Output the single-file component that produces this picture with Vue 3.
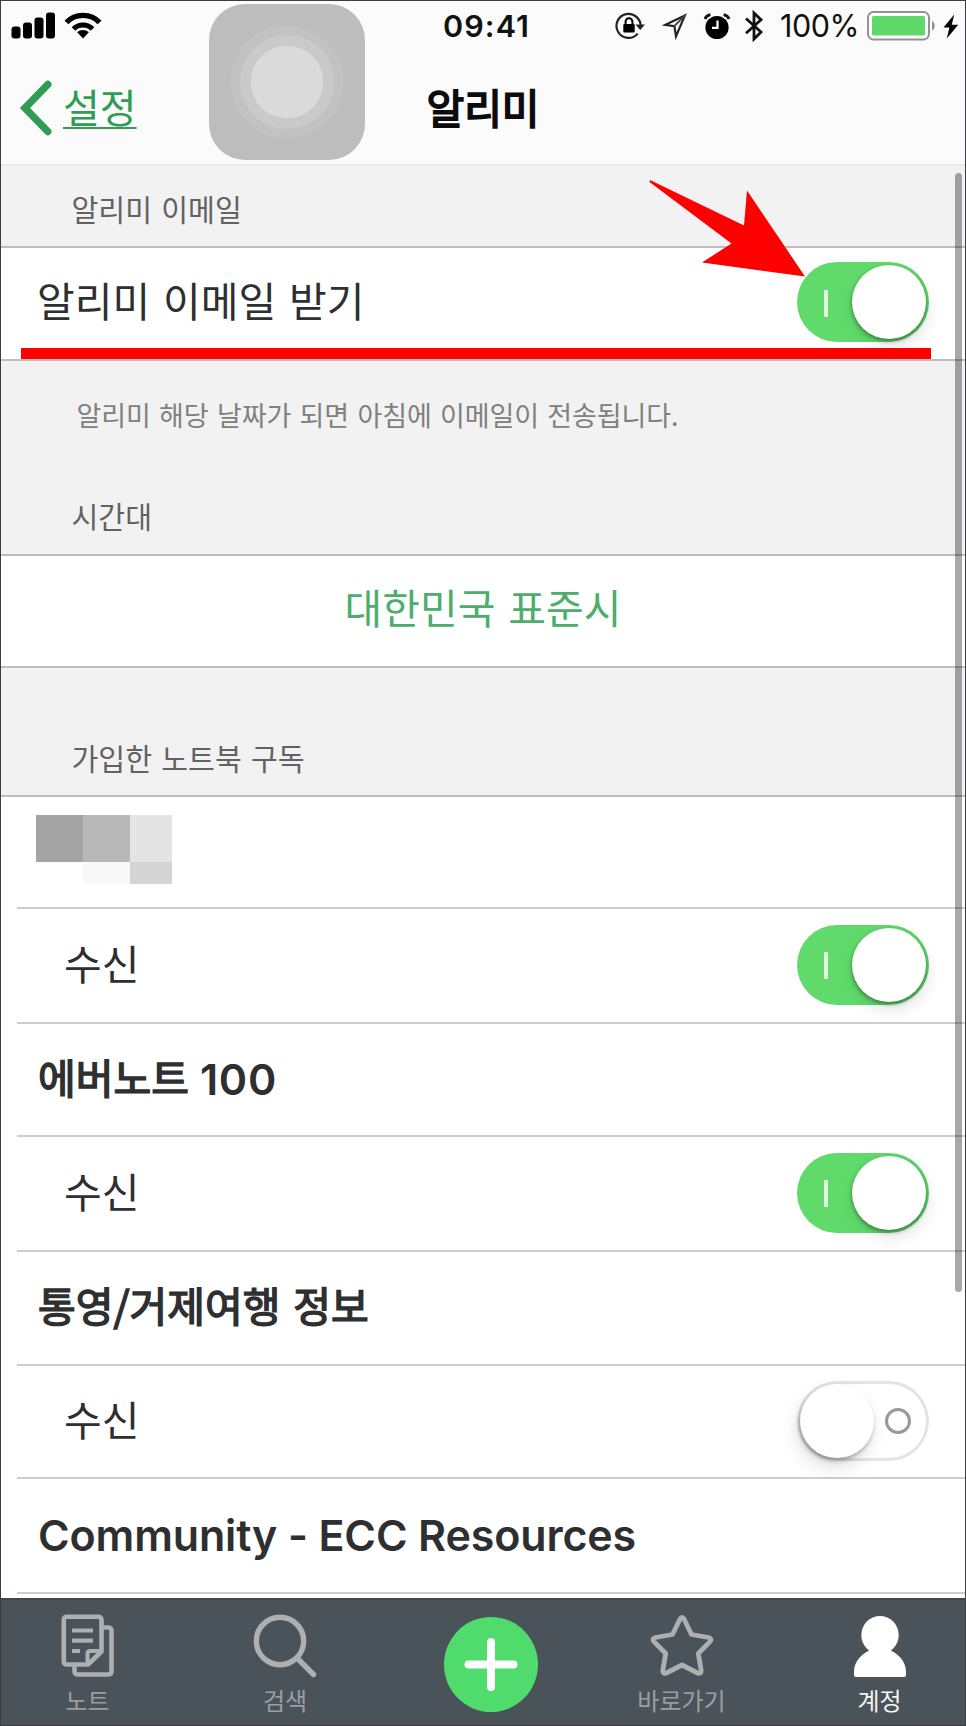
<script setup>
import { ref } from 'vue'

const emailOn = ref(true)

const notebooks = ref([
  { kind: 'masked', height: 112 },
  { kind: 'toggle', label: '수신', on: true, height: 115 },
  { kind: 'title', label: '에버노트', latin: '100', height: 113 },
  { kind: 'toggle', label: '수신', on: true, height: 115 },
  { kind: 'title', label: '통영/거제여행 정보', height: 114 },
  { kind: 'toggle', label: '수신', on: false, height: 113 },
  { kind: 'title', latin: 'Community - ECC Resources', height: 115 },
])
</script>

<template>
  <div class="screen">
    <header class="top">
      <div class="status">
        <svg class="signal" width="46" height="28" viewBox="0 0 46 28">
          <rect x="0.5" y="14.5" width="9" height="12" rx="3" />
          <rect x="12" y="10.5" width="9" height="16" rx="3" />
          <rect x="23.5" y="5.5" width="9" height="21" rx="3" />
          <rect x="35" y="0.5" width="9" height="26" rx="3" />
        </svg>
        <svg class="wifi" width="38" height="28" viewBox="0 0 38 28">
          <path d="M2.5 10.5 C11 1 27 1 35.5 10.5" fill="none" stroke="#000" stroke-width="5.4" />
          <path d="M9.5 17 C14.5 11.6 23.5 11.6 28.5 17" fill="none" stroke="#000" stroke-width="5" />
          <path d="M13.2 20.2 C16.5 17.4 21.5 17.4 24.8 20.2 L19 26.5Z" />
        </svg>
        <span class="clock">09:41</span>
        <svg class="lock" width="30" height="28" viewBox="0 0 30 28">
          <path d="M25.4 15.5 A12 12 0 1 0 22.7 21.6" fill="none" stroke="#222" stroke-width="2.2" />
          <path d="M20.5 12.5 H30 L25.2 18Z" fill="#222" />
          <rect x="8.3" y="12" width="11.4" height="8.5" rx="1" />
          <path d="M10.6 12.5 V9.6 a3.4 3.4 0 0 1 6.8 0 V12.5" fill="none" stroke="#000" stroke-width="2" />
        </svg>
        <svg class="location" width="26" height="27" viewBox="0 0 26 27">
          <path d="M22.8 2.6 L3.4 11.8 L12.4 13.2 L14 23.4Z" fill="none" stroke="#222" stroke-width="2.2" stroke-linejoin="miter" />
          <path d="M23.5 1.9 L12 13.4" stroke="#444" stroke-width="2" />
        </svg>
        <svg class="alarm" width="28" height="27" viewBox="0 0 28 27">
          <circle cx="14" cy="14.500" r="11.6" />
          <path d="M2 6 Q3.2 2.400 7.4 1.6 M20.6 1.6 Q24.8 2.400 26 6" fill="none" stroke="#111" stroke-width="2.8" />
          <path d="M14.5 7.5 V14.8 H9" fill="none" stroke="#fff" stroke-width="2.2" />
        </svg>
        <svg class="bluetooth" width="20" height="32" viewBox="0 0 20 32">
          <path d="M2 8.5 L17 22 L10 29 V3 L17 9.8 L2 23.2" fill="none" stroke="#111" stroke-width="2.8" />
        </svg>
        <span class="percent">100%</span>
        <svg class="battery" width="70" height="30" viewBox="0 0 70 30">
          <rect x="1" y="1" width="61" height="27.5" rx="5.5" fill="#fff" stroke="#929292" stroke-width="2" />
          <rect x="5" y="5" width="53" height="19.5" rx="1.5" fill="#5fd968" />
          <path d="M65 10 C68.6 11.5 68.6 18 65 19.5Z" fill="#929292" />
        </svg>
        <svg class="bolt" width="16" height="25" viewBox="0 0 16 25">
          <path d="M11.2 0.5 L0.5 13.5 H6.4 L3.8 24.5 L15.2 10.8 H8.8Z" />
        </svg>
      </div>
      <nav class="navbar">
        <a class="back">
          <svg width="34" height="56" viewBox="0 0 34 56">
            <path d="M28.8 4.5 L6 28 L28.8 51.5" fill="none" stroke="#319c53" stroke-width="7.4" stroke-linecap="round" stroke-linejoin="miter" />
          </svg>
          <span class="ko back-label">설정</span>
        </a>
        <h1 class="ko page-title">알리미</h1>
      </nav>
    </header>

    <div class="assistive">
      <svg width="156" height="156" viewBox="0 0 156 156">
        <circle cx="78" cy="78" r="56.5" fill="#c2c2c2" />
        <circle cx="78" cy="78" r="47" fill="#cacaca" />
        <circle cx="78" cy="78" r="37" fill="#dadada" stroke="#c6c6c6" stroke-width="1" />
      </svg>
    </div>

    <section class="caption first"><span class="ko">알리미 이메일</span></section>
    <div class="row email">
      <span class="ko label">알리미 이메일 받기</span>
      <span class="switch" :class="{ on: emailOn }"><i class="mark"></i><i class="knob"></i></span>
      <span class="underline"></span>
    </div>

    <section class="caption zone">
      <p class="ko hint">알리미 해당 날짜가 되면 아침에 이메일이 전송됩니다.</p>
      <span class="ko">시간대</span>
    </section>
    <div class="row timezone"><span class="ko">대한민국 표준시</span></div>

    <section class="caption subs"><span class="ko">가입한 노트북 구독</span></section>
    <ul class="list">
      <li v-for="(item, i) in notebooks" :key="i" class="item" :class="item.kind" :style="{ height: item.height + 'px' }">
        <div v-if="item.kind === 'masked'" class="mosaic">
          <i class="m1"></i><i class="m2"></i><i class="m3"></i>
          <i class="m4"></i><i class="m5"></i><i class="m6"></i>
        </div>
        <template v-else>
          <span v-if="item.label" class="ko label">{{ item.label }}</span>
          <span v-if="item.latin" class="latin">{{ item.latin }}</span>
        </template>
        <span v-if="item.kind === 'toggle'" class="switch" :class="{ on: item.on }"><i class="mark"></i><i class="knob"></i></span>
      </li>
    </ul>

    <footer class="tabs">
      <div class="tab">
        <svg width="54" height="64" viewBox="0 0 54 64" fill="none" stroke="#adb0b3" stroke-width="4.6" stroke-linejoin="round">
          <path d="M41 13.5 H47 Q50.5 13.5 50.5 17 V57 Q50.5 60.5 47 60.5 H17 Q13.5 60.5 13.5 57 V51" />
          <path d="M6 2.8 H37 Q40.5 2.8 40.5 6.3 V37.5 L27 50.5 H6 Q2.8 50.5 2.8 47 V6 Q2.8 2.8 6 2.8Z" />
          <path d="M26.5 49 V39.5 Q26.5 37 29 37 H39" stroke-width="4" />
          <path d="M11 16.5 H32 M11 26.7 H32 M11 37 H19" stroke-width="4.2" />
        </svg>
        <span class="ko">노트</span>
      </div>
      <div class="tab search">
        <svg width="64" height="64" viewBox="0 0 64 64" fill="none" stroke="#adb0b3">
          <circle cx="27" cy="27" r="23.7" stroke-width="5.4" />
          <path d="M44 44 L60.5 60.5" stroke-width="5.4" stroke-linecap="round" />
        </svg>
        <span class="ko">검색</span>
      </div>
      <div class="tab add">
        <svg width="94" height="95" viewBox="0 0 94 95">
          <ellipse cx="47" cy="47.5" rx="47" ry="47.5" fill="#50db6d" />
          <path d="M47 25 V70 M24.5 47.5 H69.5" stroke="#fff" stroke-width="8" stroke-linecap="round" />
        </svg>
      </div>
      <div class="tab">
        <svg width="64" height="64" viewBox="0 0 64 64" fill="none" stroke="#adb0b3" stroke-width="4.8" stroke-linejoin="round">
          <path d="M30 5 Q32 1.6 34 5 L41.5 20.5 L58.6 23.5 Q62.4 24.6 60 27.6 L48.3 39.5 L51.2 56.4 Q51.2 60.4 47.6 59 L32 51 L16.4 59 Q12.8 60.4 12.8 56.4 L15.7 39.5 L4 27.6 Q1.6 24.6 5.4 23.5 L22.5 20.5Z" />
        </svg>
        <span class="ko">바로가기</span>
      </div>
      <div class="tab account">
        <svg width="54" height="64" viewBox="0 0 54 64" fill="#fff">
          <ellipse cx="27" cy="21" rx="18.700" ry="19" />
          <path d="M16 34 Q17 36 14.500 37.500 C6 42 1 49.500 1 58 V61 Q1 63 3 63 H51 Q53 63 53 61 V58 C53 49.500 48 42 39.500 37.500 Q37 36 38 34Z" />
        </svg>
        <span class="ko">계정</span>
      </div>
    </footer>

    <div class="scrollbar"></div>
    <svg class="arrow" width="160" height="102" viewBox="0 0 160 102">
      <path d="M1 1 L95 46.500 L98 11.500 L156 97.500 L53 83.500 L82.500 64.500 L0.500 3Z" fill="#fe0000" />
    </svg>
  </div>
</template>

<style>
body {
  margin: 0;
}
</style>

<style scoped>
.screen {
  position: relative;
  box-sizing: border-box;
  width: 966px;
  height: 1726px;
  border: 1px solid #3d3d41;
  overflow: hidden;
  background: #fff;
  color: #2e2f31;
  font-family: "Inter", "Noto Sans CJK KR", sans-serif;
}
.screen svg {
  display: block;
  flex: none;
}
.ko {
  font-family: "Noto Sans CJK KR", sans-serif;
  word-spacing: 0.09em;
  white-space: nowrap;
}
.top {
  box-sizing: border-box;
  height: 165px;
  background: #fbfbfb;
  border-bottom: 2px solid #e9e9e9;
}
.status {
  display: flex;
  align-items: center;
  height: 50px;
  color: #111;
}
.signal {
  margin-left: 10px;
}
.wifi {
  margin-left: 7px;
}
.clock {
  width: 90px;
  margin-left: 341px;
  font-size: 30.5px;
  font-weight: 600;
  letter-spacing: 1.1px;
  line-height: 50px;
}
.lock {
  margin-left: 82px;
}
.location {
  margin-left: 17px;
}
.alarm {
  margin-left: 15px;
}
.bluetooth {
  margin-left: 13px;
}
.percent {
  width: 82px;
  margin-left: 16px;
  font-size: 30.5px;
  letter-spacing: -0.5px;
  line-height: 50px;
}
.battery {
  margin-left: 5px;
}
.bolt {
  margin-left: 6px;
}
.navbar {
  display: grid;
  grid-template-columns: 1fr auto 1fr;
  align-items: center;
  height: 114px;
}
.back {
  display: flex;
  align-items: center;
  padding-left: 18px;
}
.back-label {
  margin-left: 10px;
  margin-top: -5px;
  font-size: 40px;
  line-height: 48px;
  color: #319c53;
  text-decoration: underline;
  text-decoration-thickness: 2px;
  text-underline-offset: 4px;
}
.page-title {
  margin: 0 0 5px;
  font-size: 41px;
  line-height: 48px;
  font-weight: 400;
  -webkit-text-stroke: 1.8px #0c0c0c;
  color: #0c0c0c;
}
.assistive {
  position: absolute;
  left: 208px;
  top: 3px;
  width: 156px;
  height: 156px;
  border-radius: 36px;
  background: #bdbdbd;
}
.caption {
  box-sizing: border-box;
  display: flex;
  flex-direction: column;
  justify-content: flex-end;
  padding-left: 70.5px;
  background: #f2f2f2;
  border-bottom: 2px solid #bebebe;
  font-size: 29.2px;
  line-height: 40px;
  color: #626262;
}
.first {
  height: 82px;
  padding-bottom: 18px;
}
.zone {
  height: 195px;
  padding-bottom: 19px;
}
.subs {
  height: 129px;
  padding-bottom: 18px;
}
.hint {
  margin: 0 0 60px 5px;
  font-size: 27px;
  letter-spacing: -0.1px;
  color: #808080;
}
.row {
  position: relative;
  box-sizing: border-box;
  display: flex;
  align-items: center;
  border-bottom: 2px solid #bebebe;
  font-size: 41px;
}
.email {
  height: 113px;
  padding: 0 36px 0 36px;
}
.email .label {
  padding-bottom: 9px;
}
.email .switch {
  margin-top: -3px;
}
.underline {
  position: absolute;
  left: 20px;
  bottom: 0;
  width: 910px;
  height: 11px;
  background: #fe0000;
}
.timezone {
  height: 112px;
  justify-content: center;
  padding-bottom: 10px;
  color: #4cae6a;
}
.list {
  margin: 0;
  padding: 0 0 0 16px;
  list-style: none;
}
.item {
  box-sizing: border-box;
  display: flex;
  align-items: center;
  padding: 0 36px 2px 21px;
  border-bottom: 2px solid #cdcdcd;
  font-size: 41px;
  line-height: 60px;
}
.item .label {
  padding-bottom: 6px;
}
.toggle {
  padding-left: 47px;
}
.title {
  font-weight: 600;
}
.title .label {
  font-weight: 400;
  -webkit-text-stroke: 1.5px #2e2f31;
}
.title .label + .latin {
  margin-left: 11px;
  letter-spacing: 0.8px;
}
.latin {
  font-size: 43px;
  letter-spacing: -0.15px;
}
.masked {
  align-items: flex-start;
  padding: 18px 0 0 19px;
}
.mosaic {
  display: grid;
  grid-template-columns: 47px 47px 42px;
  grid-template-rows: 47px 22px;
}
.m1 { background: #a4a4a4; }
.m2 { background: #b8b8b8; }
.m3 { background: #e4e4e4; }
.m5 { background: #f8f8f8; }
.m6 { background: #d5d5d5; }
.switch {
  box-sizing: border-box;
  display: flex;
  flex-direction: row-reverse;
  align-items: center;
  justify-content: space-between;
  width: 132px;
  height: 80px;
  margin-left: auto;
  padding: 0 18px 0 3px;
  border-radius: 40px;
  box-shadow: inset 0 0 0 3px #e4e4e4;
}
.switch .mark {
  box-sizing: border-box;
  width: 26px;
  height: 26px;
  border: 3px solid #999;
  border-radius: 50%;
}
.switch .knob {
  width: 74px;
  height: 74px;
  border-radius: 50%;
  background: #fff;
  box-shadow: -1px 3px 4px rgba(0, 0, 0, 0.28), -3px 9px 18px rgba(0, 0, 0, 0.13);
}
.switch.on {
  flex-direction: row;
  padding: 0 3px 0 27px;
  background: #60da6b;
  box-shadow: none;
}
.switch.on .mark {
  width: 4px;
  height: 27px;
  margin-top: 2px;
  border: 0;
  border-radius: 0;
  background: #dff7df;
}
.switch.on .knob {
  box-shadow: 0 2px 4px rgba(0, 0, 0, 0.4), 2px 8px 16px rgba(0, 0, 0, 0.1);
}
.tabs {
  display: grid;
  grid-template-columns: 173px 222px 190px 191px 188px;
  box-sizing: border-box;
  height: 127px;
  margin-top: 4px;
  border-top: 2px solid #42474b;
  background: #4b535a;
}
.tab {
  display: flex;
  flex-direction: column;
  align-items: center;
  padding-top: 14px;
  font-size: 24px;
  line-height: 30px;
  color: #9a9ea2;
}
.tab .ko {
  margin-top: 7px;
}
.add {
  padding-top: 17px;
}
.account {
  padding-left: 17px;
  color: #f4f4f4;
}
.scrollbar {
  position: absolute;
  left: 954px;
  top: 172px;
  width: 7px;
  height: 1119px;
  border-radius: 4px;
  background: rgba(0, 0, 0, 0.34);
}
.arrow {
  position: absolute;
  left: 648px;
  top: 178px;
}
</style>
